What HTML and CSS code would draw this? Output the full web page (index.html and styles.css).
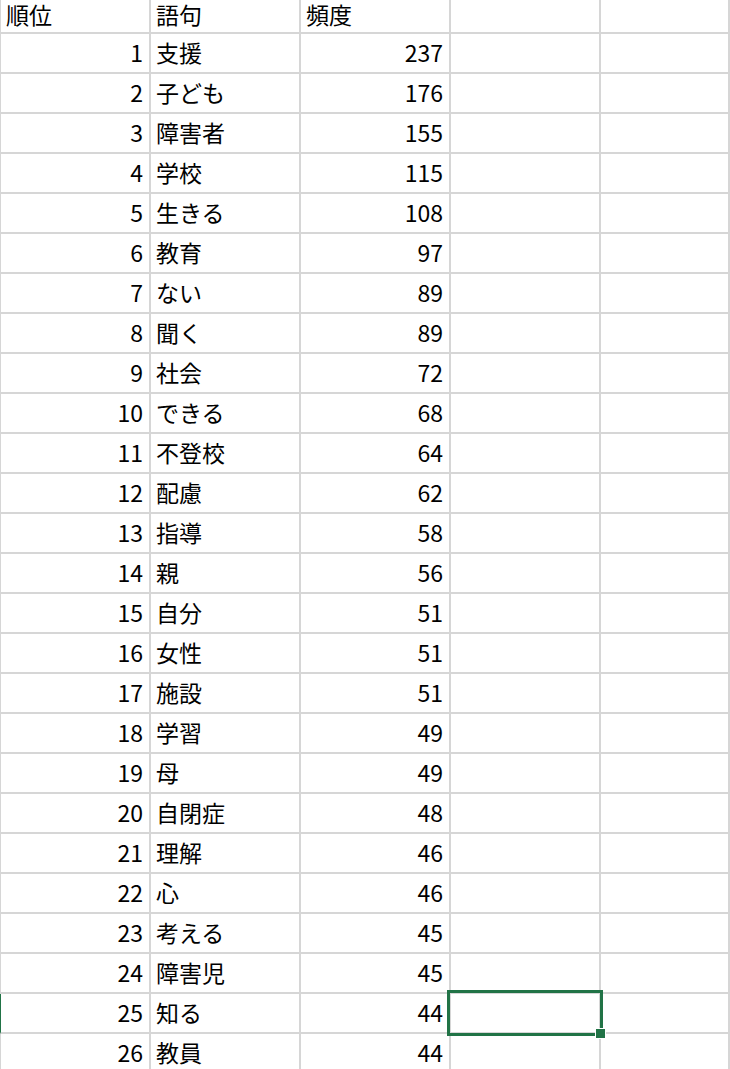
FILE: index.html
```html
<!DOCTYPE html>
<html lang="ja">
<head>
<meta charset="utf-8">
<link rel="stylesheet" href="styles.css">
</head>
<body>
<div class="sheet" id="sheet">
  <div class="cell hdr first">順位</div><div class="cell hdr">語句</div><div class="cell hdr">頻度</div><div class="cell hdr"></div><div class="cell hdr last"></div>
</div>
<script src="app.js"></script>
</body>
</html>
```
FILE: app.js
```js
const data = [
["1","支援","237"],["2","子ども","176"],["3","障害者","155"],["4","学校","115"],["5","生きる","108"],
["6","教育","97"],["7","ない","89"],["8","聞く","89"],["9","社会","72"],["10","できる","68"],
["11","不登校","64"],["12","配慮","62"],["13","指導","58"],["14","親","56"],["15","自分","51"],
["16","女性","51"],["17","施設","51"],["18","学習","49"],["19","母","49"],["20","自閉症","48"],
["21","理解","46"],["22","心","46"],["23","考える","45"],["24","障害児","45"],["25","知る","44"],["26","教員","44"]
];
const sheet = document.getElementById("sheet");
data.forEach((r, i) => {
  const active = i === 24;
  const a = document.createElement("div");
  a.className = "cell num first" + (active ? " active-row" : "");
  a.textContent = r[0];
  const b = document.createElement("div");
  b.className = "cell";
  b.textContent = r[1];
  const c = document.createElement("div");
  c.className = "cell num";
  c.textContent = r[2];
  const d = document.createElement("div");
  d.className = "cell";
  if (active) {
    const sel = document.createElement("div");
    sel.className = "selection";
    const h = document.createElement("div");
    h.className = "handle";
    sel.appendChild(h);
    d.appendChild(sel);
  }
  const e = document.createElement("div");
  e.className = "cell last";
  [a, b, c, d, e].forEach(x => sheet.appendChild(x));
});
```
FILE: styles.css
```css
html, body {
  margin: 0;
  padding: 0;
  background: #ffffff;
  overflow: hidden;
}
body {
  width: 730px;
  height: 1069px;
  font-family: "Noto Sans CJK JP", "Noto Sans", sans-serif;
  color: #000000;
}
.sheet {
  display: grid;
  grid-template-columns: 151px 150px 150px 150px 1fr;
  grid-template-rows: 34px;
  grid-auto-rows: 40px;
}
.cell {
  box-sizing: border-box;
  border-right: 2px solid #d6d6d6;
  border-bottom: 2px solid #d6d6d6;
  font-size: 23px;
  line-height: 28px;
  display: flex;
  align-items: flex-end;
  padding: 0 5px 6px 5px;
  white-space: nowrap;
  position: relative;
}
.cell.hdr {
  padding-bottom: 4px;
}
.cell.first {
  border-left: 1px solid #d6d6d6;
}
.cell.active-row {
  border-left-color: #217346;
}
.cell.num {
  justify-content: flex-end;
  padding-right: 6px;
}
.selection {
  position: absolute;
  z-index: 5;
  left: -4px;
  top: -4px;
  width: 156px;
  height: 46px;
  box-sizing: border-box;
  border: 3px solid #217346;
}
.handle {
  position: absolute;
  right: -6px;
  bottom: -6px;
  width: 9px;
  height: 9px;
  background: #217346;
  border: 1px solid #ffffff;
}
```
